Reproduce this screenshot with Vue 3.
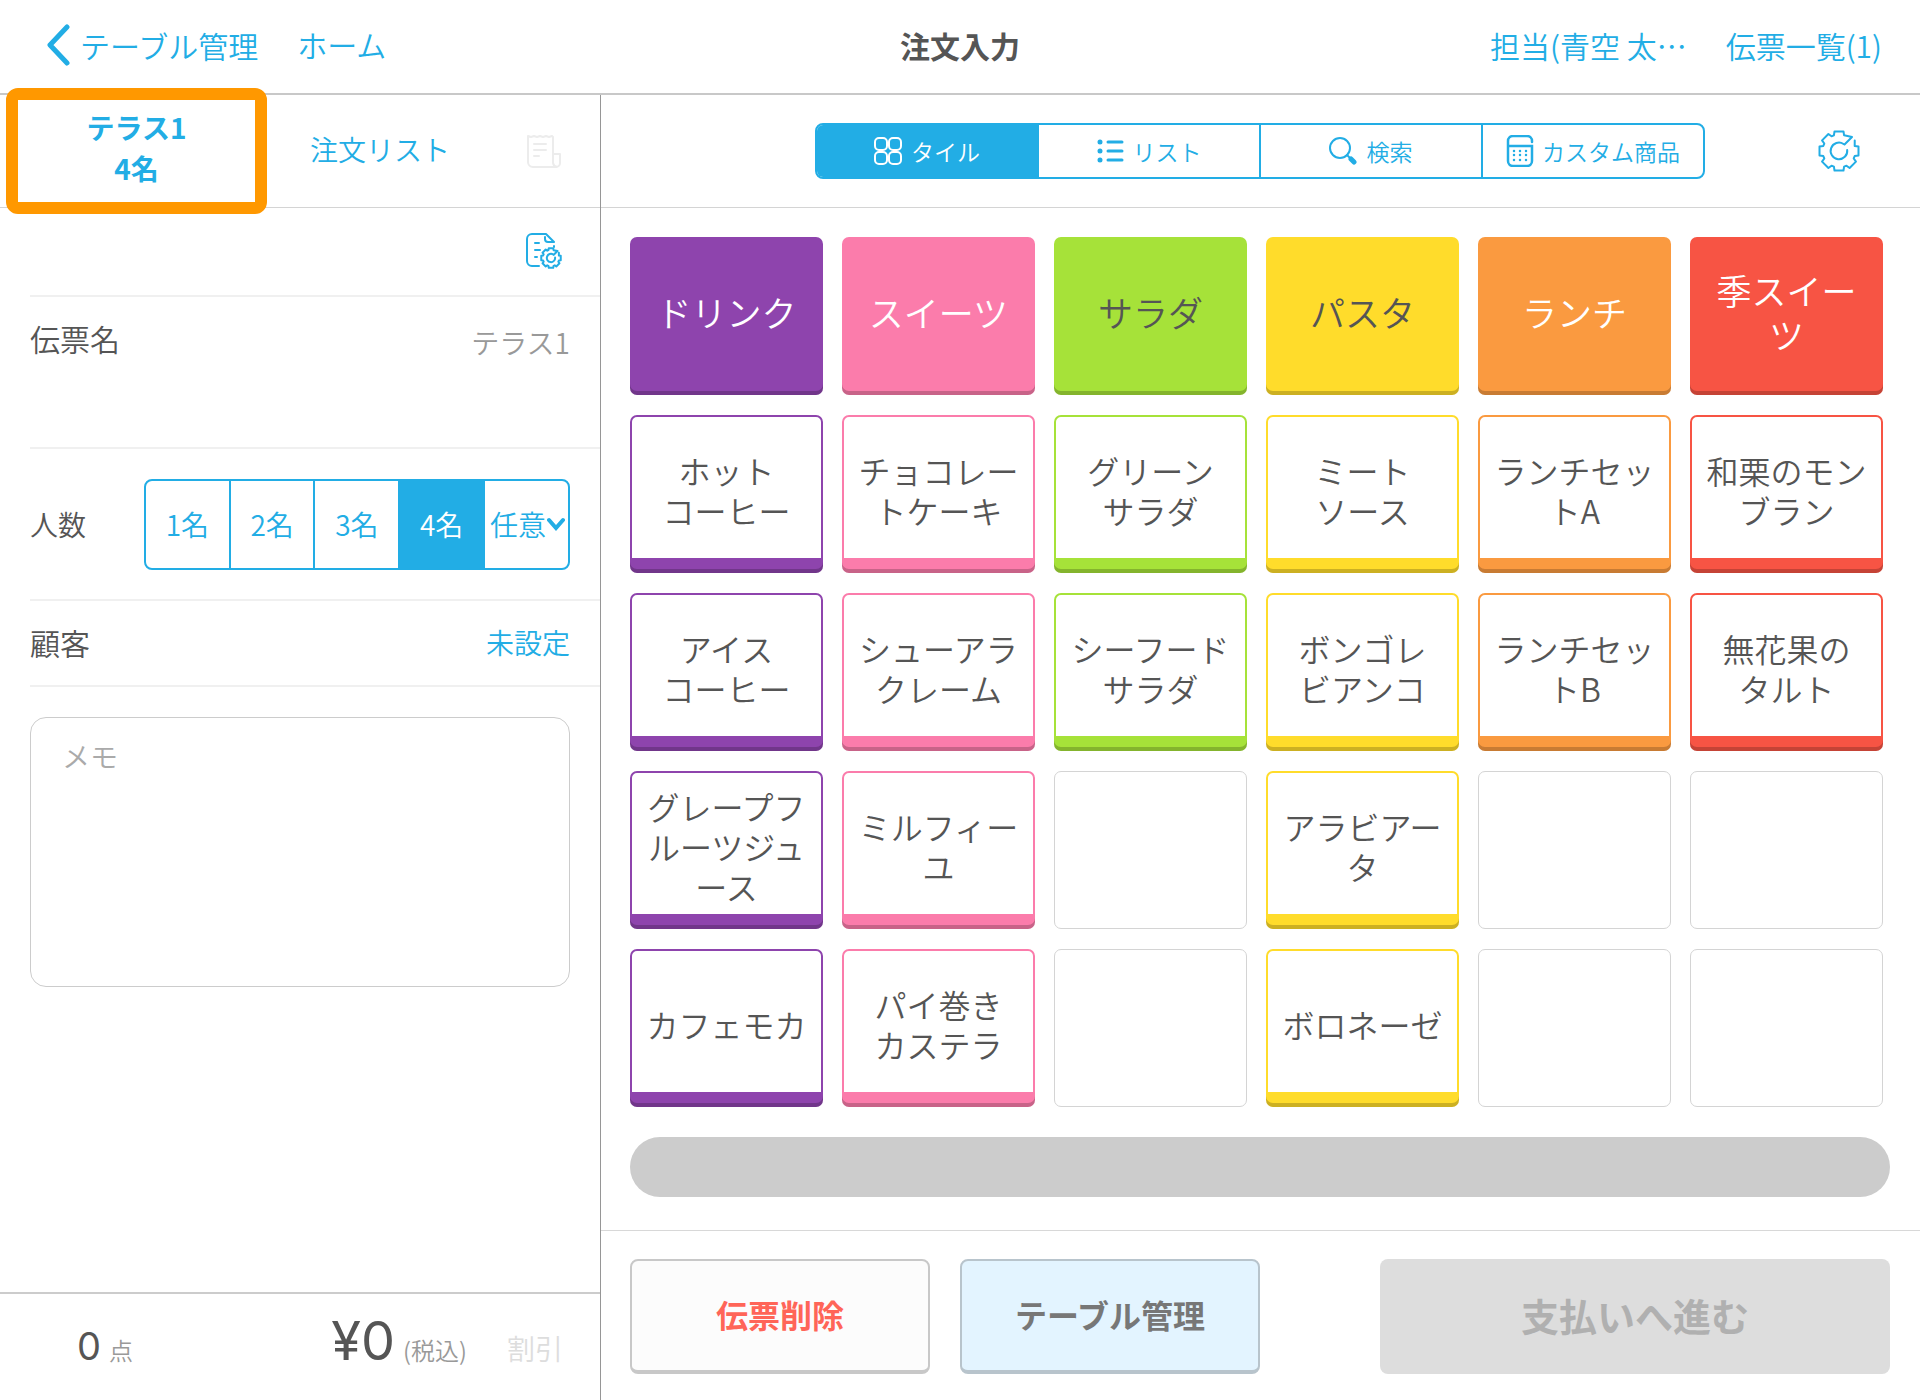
<script setup>
import { ref } from 'vue'

const counts = ['1名', '2名', '3名', '4名']
const selectedCount = ref('4名')
const slipName = ref('テラス1')
const memo = ref('')

const columns = [
  { key: 'purple', name: 'ドリンク', items: ['ホット\nコーヒー', 'アイス\nコーヒー', 'グレープフ\nルーツジュ\nース', 'カフェモカ'] },
  { key: 'pink', name: 'スイーツ', items: ['チョコレー\nトケーキ', 'シューアラ\nクレーム', 'ミルフィー\nユ', 'パイ巻き\nカステラ'] },
  { key: 'green', name: 'サラダ', items: ['グリーン\nサラダ', 'シーフード\nサラダ', null, null] },
  { key: 'yellow', name: 'パスタ', items: ['ミート\nソース', 'ボンゴレ\nビアンコ', 'アラビアー\nタ', 'ボロネーゼ'] },
  { key: 'orange', name: 'ランチ', items: ['ランチセッ\nトA', 'ランチセッ\nトB', null, null] },
  { key: 'red', name: '季スイー\nツ', items: ['和栗のモン\nブラン', '無花果の\nタルト', null, null] },
]

// Gear outline: seven teeth counter-clockwise from the top, open at the upper right.
function polar(radius, degrees) {
  const a = (degrees * Math.PI) / 180
  return `${(radius * Math.sin(a)).toFixed(2)} ${(-radius * Math.cos(a)).toFixed(2)}`
}
const gearPoints = []
for (let k = 0; k < 7; k++) {
  const a = -45 * k
  gearPoints.push(polar(16.5, a + 18), polar(20, a + 13), polar(20, a - 13), polar(16.5, a - 18))
}
const gearOutline = `M5.5 -6.5L13 -14L${gearPoints.join('L')}L${polar(19, 56)}`
const gearRing = 'M4.500 -7A8.300 8.300 0 1 0 8.200 -1'
</script>

<template>
  <div class="app">
    <header class="topbar">
      <nav class="side">
        <a href="#" class="back">
          <svg width="24" height="42" viewBox="0 0 24 42"><path d="M21 3 4 21l17 18" fill="none" stroke="currentColor" stroke-width="5" stroke-linecap="round" stroke-linejoin="round" /></svg>
          <span>テーブル管理</span>
        </a>
        <a href="#">ホーム</a>
      </nav>
      <h1>注文入力</h1>
      <nav class="side end">
        <a href="#">担当(青空 太⋯</a>
        <a href="#">伝票一覧(1)</a>
      </nav>
    </header>

    <div class="body">
      <aside class="slip">
        <div class="tabs">
          <button type="button" class="tab current">テラス1<br>4名</button>
          <button type="button" class="tab list">注文リスト</button>
          <button type="button" class="icon-button faint" aria-label="レシート" disabled>
            <svg width="36" height="36" viewBox="0 0 36 36" fill="none" stroke="currentColor" stroke-width="2" stroke-linecap="round" stroke-linejoin="round"><path d="M2 3l3 1 3-1 3 1 3-1 3 1 3-1 3 1 3-1 1 1v26a5 5 0 0 0 4 4H7a5 5 0 0 1-5-5zM28 21h6v9a4 4 0 0 1-4 4M8 11h12M8 17h12M8 23h5" /></svg>
          </button>
        </div>

        <div class="tools">
          <button type="button" class="icon-button" aria-label="伝票設定">
            <svg width="36" height="36" viewBox="0 0 36 36" fill="none" stroke="currentColor" stroke-width="2" stroke-linecap="round" stroke-linejoin="round">
              <path d="M13 33H6a5 5 0 0 1-5-5V6a5 5 0 0 1 5-5h14l8 8h-6a3 3 0 0 1-3-3V4M28 13v1M9 10h4M9 17h5M9 24h2" />
              <g transform="translate(25 25) scale(0.5)" stroke-width="4">
                <path :d="gearOutline" />
                <path :d="gearRing" />
              </g>
            </svg>
          </button>
        </div>

        <div class="field name">
          <label for="slip-name">伝票名</label>
          <input id="slip-name" v-model="slipName" type="text">
        </div>

        <div class="field people">
          <span>人数</span>
          <div class="segments">
            <button v-for="c in counts" :key="c" type="button" :class="{ active: c === selectedCount }" @click="selectedCount = c">{{ c }}</button>
            <div class="any">
              <select aria-label="任意の人数"><option>任意</option></select>
              <svg width="18" height="14" viewBox="0 0 18 14"><path d="m2 3 7 8 7-8" fill="none" stroke="currentColor" stroke-width="4" stroke-linecap="round" /></svg>
            </div>
          </div>
        </div>

        <div class="field customer">
          <span>顧客</span>
          <a href="#">未設定</a>
        </div>

        <textarea v-model="memo" aria-label="メモ" placeholder="メモ"></textarea>

        <footer class="total">
          <span class="qty">0</span><span class="unit">点</span>
          <span class="sum">¥0</span><span class="tax">(税込)</span>
          <button type="button" disabled>割引</button>
        </footer>
      </aside>

      <main>
        <div class="modes">
          <div class="mode-tabs">
            <button type="button" class="active">
              <svg width="28" height="28" viewBox="0 0 28 28" fill="none" stroke="currentColor" stroke-width="2"><rect x="1" y="1" width="12" height="12" rx="4" /><rect x="15" y="1" width="12" height="12" rx="4" /><rect x="1" y="15" width="12" height="12" rx="4" /><rect x="15" y="15" width="12" height="12" rx="4" /></svg>
              タイル
            </button>
            <button type="button" class="tight">
              <svg width="28" height="28" viewBox="0 0 28 28" fill="none" stroke="currentColor" stroke-width="3" stroke-linecap="round"><path d="M12 5h14M12 14h14M12 23h14" /><path d="M4 5h0M4 14h0M4 23h0" stroke-width="5" /></svg>
              リスト
            </button>
            <button type="button">
              <svg width="28" height="28" viewBox="0 0 28 28" fill="none" stroke="currentColor" stroke-width="2" stroke-linecap="round"><circle cx="11" cy="11" r="10" /><path d="m18 18 3 3" /><path d="m22 22 3 3" stroke-width="5" /></svg>
              検索
            </button>
            <button type="button" class="tight">
              <svg width="28" height="32" viewBox="0 0 28 32" fill="none" stroke="currentColor" stroke-width="2.500" stroke-linecap="round"><path d="M26 7V6a5 5 0 0 0-5-5H7a5 5 0 0 0-5 5v20a5 5 0 0 0 5 5h14a5 5 0 0 0 5-5V11H2" /><path d="M8 16h13M8 20h13M8 25h13" stroke-dasharray="0 6" /></svg>
              カスタム商品
            </button>
          </div>
          <button type="button" class="gear" aria-label="設定">
            <svg width="42" height="42" viewBox="-21 -21 42 42" fill="none" stroke="currentColor" stroke-width="2" stroke-linecap="round" stroke-linejoin="round">
              <path :d="gearOutline" />
              <path :d="gearRing" />
            </svg>
          </button>
        </div>

        <section class="catalog">
          <div class="grid">
            <div v-for="col in columns" :key="col.key" class="column" :class="col.key">
              <button type="button" class="tile category">{{ col.name }}</button>
              <template v-for="(item, i) in col.items" :key="i">
                <button v-if="item" type="button" class="tile item">{{ item }}</button>
                <div v-else class="tile empty"></div>
              </template>
            </div>
          </div>
          <div class="pager"></div>
        </section>

        <footer class="actions">
          <button type="button" class="delete">伝票削除</button>
          <button type="button" class="tables">テーブル管理</button>
          <button type="button" class="pay" disabled>支払いへ進む</button>
        </footer>
      </main>
    </div>
  </div>
</template>

<style>
body {
  background: #fff;
}
</style>

<style scoped>
.app {
  --blue: #22ade5;
  --ink: #555;
  display: flex;
  flex-direction: column;
  min-height: 100vh;
  font-family: "Noto Sans CJK JP", sans-serif;
  font-weight: 350;
  font-size: 28px;
  line-height: 40px;
  color: var(--ink);
}
*, *::before, *::after { box-sizing: border-box; }
button, input, select, textarea {
  font: inherit;
  color: inherit;
  margin: 0;
  padding: 0;
  border: 0;
  background: none;
}
a { color: var(--blue); text-decoration: none; }
svg { display: block; flex: none; }

.topbar {
  display: flex;
  align-items: center;
  height: 95px;
  padding: 0 38px 4px;
  border-bottom: 2px solid #c8c8c8;
  font-size: 30px;
}
.side { display: flex; flex: 1; gap: 39px; }
.end { justify-content: flex-end; }
.back { display: flex; align-items: center; gap: 10px; margin-left: 8px; }
h1 { margin: 0; font-size: 30px; font-weight: 700; }

.body { display: flex; flex: 1; }
.slip {
  display: flex;
  flex-direction: column;
  width: 31.3%;
  border-right: 1px solid #969696;
}
.tabs {
  display: flex;
  align-items: center;
  height: 113px;
  padding-right: 38px;
  border-bottom: 1px solid #d4d4d4;
  color: var(--blue);
}
.tab { padding-bottom: 4px; }
.tab.current {
  position: relative;
  z-index: 1;
  width: 261px;
  height: 126px;
  margin-left: 6px;
  padding-bottom: 6px;
  border: 12px solid #ff9800;
  border-radius: 12px;
  background: #fff;
  font-weight: 700;
  line-height: 41px;
}
.tab.list { margin-left: 43px; }
.icon-button { margin-left: auto; color: var(--blue); }
.faint { color: #ececec; }
.tools {
  display: flex;
  align-items: center;
  height: 89px;
  margin-left: 30px;
  padding: 0 38px 2px 0;
  border-bottom: 2px solid #f0f0f0;
}
.field {
  display: flex;
  justify-content: space-between;
  align-items: center;
  margin-left: 30px;
  padding-right: 30px;
  border-bottom: 2px solid #f0f0f0;
}
.name { height: 152px; align-items: flex-start; padding-top: 21px; font-size: 30px; }
.name input { width: 240px; height: 48px; font-size: 28px; text-align: right; color: #999; }
.people { height: 152px; }
.segments {
  display: flex;
  width: 426px;
  height: 91px;
  border: 2px solid var(--blue);
  border-radius: 8px;
  overflow: hidden;
  color: var(--blue);
}
.segments > * { flex: 1 1 0; min-width: 0; }
.segments > * + * { border-left: 2px solid var(--blue); }
.active { background: var(--blue); color: #fff; }
.segments .any { display: flex; align-items: center; flex: 0 0 85px; padding-left: 5px; }
.any select { appearance: none; width: 57px; height: 100%; }
.customer { height: 86px; padding-bottom: 2px; }
.customer span { font-size: 30px; }
textarea {
  height: 270px;
  margin: 30px 30px 0;
  padding: 18px 31px;
  border: 1px solid #ccc;
  border-radius: 16px;
  resize: none;
}
textarea::placeholder { color: #aaa; opacity: 1; }
.total {
  display: flex;
  align-items: baseline;
  height: 108px;
  margin-top: auto;
  padding: 17px 37px 0 77px;
  border-top: 2px solid #ccc;
  line-height: 60px;
}
.qty { font-family: Inter, sans-serif; font-size: 38px; font-weight: 400; }
.unit { margin-left: 8px; font-size: 24px; color: #999; }
.sum { margin-left: auto; font-family: Inter, sans-serif; font-size: 54px; font-weight: 400; }
.tax { margin-left: 8px; font-size: 24px; color: #999; }
.total button { margin-left: 40px; color: #ddd; }

main { display: flex; flex: 1; flex-direction: column; min-width: 0; }
.modes {
  display: flex;
  align-items: center;
  height: 113px;
  padding: 0 60px 0 214px;
  border-bottom: 1px solid #d4d4d4;
  color: var(--blue);
}
.mode-tabs {
  display: flex;
  flex: 0 1 890px;
  height: 56px;
  border: 2px solid var(--blue);
  border-radius: 8px;
  overflow: hidden;
}
.mode-tabs button {
  display: flex;
  flex: 1 1 0;
  align-items: center;
  justify-content: center;
  gap: 9px;
  padding-bottom: 1px;
  font-size: 23px;
}
.mode-tabs button + button { border-left: 2px solid var(--blue); }
.mode-tabs .tight { gap: 8px; }
.gear { margin-left: auto; }

.catalog { padding: 29px 30px 33px 29px; }
.grid { display: grid; grid-template-columns: repeat(6, 1fr); gap: 19px; padding-right: 7px; }
.column { display: flex; flex-direction: column; gap: 20px; }
.tile {
  display: flex;
  align-items: center;
  justify-content: center;
  height: 158px;
  border-radius: 7px;
  text-align: center;
  white-space: pre;
}
.category {
  background: var(--c);
  box-shadow: inset 0 -4px rgba(0, 0, 0, 0.2);
  padding-bottom: 8px;
  font-size: 35px;
  line-height: 44px;
  color: #fff;
}
.item {
  position: relative;
  border: 2px solid var(--c);
  background: linear-gradient(var(--c), var(--c)) bottom / 100% 13px no-repeat #fff;
  padding-bottom: 8px;
  font-size: 32px;
  line-height: 40px;
}
.item::after {
  content: "";
  position: absolute;
  inset: -2px;
  border-radius: 7px;
  box-shadow: inset 0 -4px rgba(0, 0, 0, 0.2);
}
.empty { border: 1px solid #d4d4d4; }
.purple { --c: #8e44ad; }
.pink { --c: #fb7cab; }
.green { --c: #a6e239; }
.yellow { --c: #ffdc2b; }
.orange { --c: #fa9a40; }
.red { --c: #f75444; }
.green .category, .yellow .category { color: var(--ink); }
.pager { height: 60px; margin-top: 30px; border-radius: 30px; background: #ccc; }

.actions {
  display: flex;
  flex: 1;
  gap: 30px;
  padding: 28px 30px 25px 29px;
  border-top: 1px solid #d8d8d8;
  font-size: 32px;
  font-weight: 700;
}
.actions button { height: 115px; width: 300px; padding-bottom: 4px; border-radius: 8px; }
.actions .delete { border: 2px solid #c8c8c8; border-bottom-width: 4px; background: #fcfcfc; color: #ff6558; }
.actions .tables { border: 2px solid #b8c4cc; border-bottom-width: 4px; background: #e3f4ff; color: #777; }
.actions .pay { width: 510px; margin-left: auto; background: #ddd; color: #b0b0b0; font-size: 38px; }
</style>
